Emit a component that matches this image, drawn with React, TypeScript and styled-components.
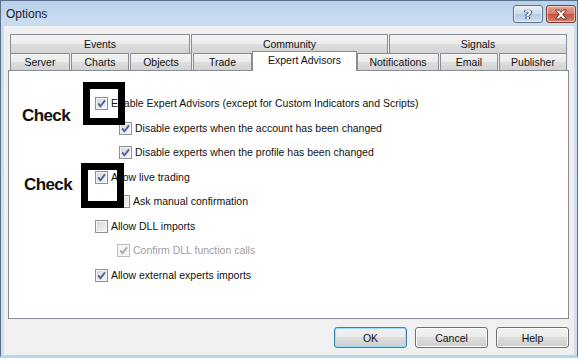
import { FC } from "react";
import styled, { createGlobalStyle } from "styled-components";

const GlobalStyle = createGlobalStyle`
  html, body {
    margin: 0;
    padding: 0;
    background: #fff;
  }
  body {
    font-family: "Liberation Sans", Arial, sans-serif;
    font-size: 10.5px;
    color: #111;
  }
`;

const Window = styled.div`
  position: relative;
  box-sizing: border-box;
  width: 578px;
  height: 358px;
  display: flex;
  flex-direction: column;
  padding: 0 3px;
  border: 1px solid #5b6e8b;
  border-bottom: 3px solid #b3d8ee;
  background: linear-gradient(#b9d0ea 0, #cadcf0 20px, #cfe0f2 100%);
`;

const TitleBar = styled.div`
  height: 25px;
  flex: none;
  display: flex;
  align-items: flex-start;
  justify-content: space-between;
  margin-right: -2px;
`;

const Title = styled.span`
  font-size: 12px;
  line-height: 12px;
  margin: 7px 0 0 2px;
  color: #1b1b2b;
`;

const CaptionButtons = styled.div`
  display: flex;
  gap: 3px;
  margin-top: 4px;
`;

const CaptionButton = styled.div<{ $close?: boolean }>`
  box-sizing: border-box;
  width: 30px;
  height: 18px;
  border-radius: 3px;
  display: flex;
  align-items: center;
  justify-content: center;
  border: 1px solid ${(p) => (p.$close ? "#7b3a30" : "#5a6d8a")};
  box-shadow: inset 0 0 0 1px rgba(255, 255, 255, 0.55);
  background: ${(p) =>
    p.$close
      ? "linear-gradient(#e8a493, #d57a66 48%, #c6523d 52%, #d7826d)"
      : "linear-gradient(#e9f0f8, #cbdbed 48%, #b4c9e2 52%, #cfdff0)"};
`;

const HelpGlyph = styled.span`
  font-family: "DejaVu Sans", sans-serif;
  font-weight: bold;
  font-size: 13px;
  line-height: 13px;
  color: #fff;
  text-shadow: 0 0 1px #2c3d5c, 0 0 1px #2c3d5c, 1px 0 0 #2c3d5c, -1px 0 0 #2c3d5c;
`;

const Client = styled.div`
  flex: 1;
  display: flex;
  flex-direction: column;
  background: #f0f0f0;
  padding: 8px 5px 7px 4px;
`;

const TabRow = styled.div<{ $h: number }>`
  display: flex;
  gap: 1px;
  height: ${(p) => p.$h}px;
  margin: 0 2px;
`;

const Tab = styled.div<{ $w: number; $active?: boolean }>`
  box-sizing: border-box;
  flex: none;
  width: ${(p) => p.$w}px;
  height: 100%;
  display: flex;
  align-items: center;
  justify-content: center;
  border: 1px solid #898c95;
  border-bottom: none;
  white-space: nowrap;
  background: linear-gradient(#f3f3f3, #ebebeb 50%, #dedede 50%, #d3d3d3);

  ${(p) =>
    p.$active &&
    `
    position: relative;
    z-index: 2;
    align-self: flex-start;
    height: 20px;
    margin: -2px -1px -1px;
    padding-bottom: 3px;
    background: #fff;
  `}
`;

const Panel = styled.div`
  box-sizing: border-box;
  height: 249px;
  flex: none;
  background: #fff;
  border: 1px solid #898c95;
  padding: 26px 0 0 86px;
  display: flex;
  flex-direction: column;
  gap: 11.5px;
`;

const OptionRow = styled.div<{ $indent: number; $disabled?: boolean }>`
  display: flex;
  align-items: center;
  height: 13px;
  padding-left: ${(p) => p.$indent}px;
  color: ${(p) => (p.$disabled ? "#a0a0a0" : "#111")};
`;

const Box = styled.span<{ $disabled?: boolean }>`
  box-sizing: border-box;
  flex: none;
  width: 13px;
  height: 13px;
  display: flex;
  align-items: center;
  justify-content: center;
  border: 1px solid ${(p) => (p.$disabled ? "#bdbdbd" : "#8e8f8f")};
  box-shadow: inset 0 0 0 1px #f6f6f6;
  background: ${(p) =>
    p.$disabled ? "#f4f4f4" : "linear-gradient(135deg, #d2d4d8, #f8f8f8)"};
`;

const Label = styled.span`
  margin-left: 3px;
  line-height: 13px;
  white-space: nowrap;
`;

const ButtonRow = styled.div`
  display: flex;
  justify-content: flex-end;
  gap: 8px;
  margin-top: 8px;
`;

const Button = styled.div<{ $default?: boolean }>`
  box-sizing: border-box;
  width: 73px;
  height: 21px;
  display: flex;
  align-items: center;
  justify-content: center;
  border-radius: 3px;
  border: 1px solid ${(p) => (p.$default ? "#3c7fb1" : "#707070")};
  box-shadow: inset 0 0 0 1px ${(p) => (p.$default ? "#9fdcf7" : "#fbfbfb")};
  background: linear-gradient(#f2f2f2, #ebebeb 50%, #dddddd 50%, #cfcfcf);
`;

const Note = styled.span<{ $x: number; $y: number }>`
  position: absolute;
  left: ${(p) => p.$x}px;
  top: ${(p) => p.$y}px;
  font-family: "Liberation Sans", Arial, sans-serif;
  font-weight: bold;
  font-size: 17px;
  line-height: 18px;
  letter-spacing: -0.6px;
  color: #111;
`;

const Marker = styled.div<{ $x: number; $y: number; $w: number; $h: number }>`
  position: absolute;
  box-sizing: border-box;
  left: ${(p) => p.$x}px;
  top: ${(p) => p.$y}px;
  width: ${(p) => p.$w}px;
  height: ${(p) => p.$h}px;
  border: 7px solid #000;
`;

const CheckBox: FC<{ checked?: boolean; disabled?: boolean }> = ({
  checked,
  disabled,
}) => (
  <Box $disabled={disabled}>
    {checked && (
      <svg width="11" height="11" viewBox="0 0 11 11">
        <path
          d="M2.2 5.4 L4.4 8.2 L9 2.4"
          fill="none"
          stroke={disabled ? "#a8a8a8" : "#4a5f99"}
          strokeWidth="1.8"
        />
      </svg>
    )}
  </Box>
);

const topTabs = [
  { name: "Events", w: 180 },
  { name: "Community", w: 197 },
  { name: "Signals", w: 178 },
];

const bottomTabs = [
  { name: "Server", w: 60 },
  { name: "Charts", w: 58 },
  { name: "Objects", w: 62 },
  { name: "Trade", w: 59 },
  { name: "Expert Advisors", w: 105, active: true },
  { name: "Notifications", w: 82 },
  { name: "Email", w: 58 },
  { name: "Publisher", w: 68 },
];

const options = [
  { text: "Enable Expert Advisors (except for Custom Indicators and Scripts)", indent: 0, checked: true },
  { text: "Disable experts when the account has been changed", indent: 24, checked: true },
  { text: "Disable experts when the profile has been changed", indent: 24, checked: true },
  { text: "Allow live trading", indent: 0, checked: true },
  { text: "Ask manual confirmation", indent: 22, checked: false },
  { text: "Allow DLL imports", indent: 0, checked: false },
  { text: "Confirm DLL function calls", indent: 22, checked: true, disabled: true },
  { text: "Allow external experts imports", indent: 0, checked: true },
];

export default function App() {
  return (
    <>
      <GlobalStyle />
      <Window>
        <TitleBar>
          <Title>Options</Title>
          <CaptionButtons>
            <CaptionButton>
              <HelpGlyph>?</HelpGlyph>
            </CaptionButton>
            <CaptionButton $close>
              <svg width="14" height="11" viewBox="0 0 14 11">
                <path
                  d="M1.5 1 H5 L7 3.3 L9 1 H12.5 L8.8 5.5 L12.5 10 H9 L7 7.7 L5 10 H1.5 L5.2 5.5 Z"
                  fill="#fff"
                  stroke="#5b2a22"
                  strokeWidth="0.9"
                />
              </svg>
            </CaptionButton>
          </CaptionButtons>
        </TitleBar>
        <Client>
          <TabRow $h={19}>
            {topTabs.map((t) => (
              <Tab key={t.name} $w={t.w}>
                {t.name}
              </Tab>
            ))}
          </TabRow>
          <TabRow $h={17}>
            {bottomTabs.map((t) => (
              <Tab key={t.name} $w={t.w} $active={t.active}>
                {t.name}
              </Tab>
            ))}
          </TabRow>
          <Panel>
            {options.map((o) => (
              <OptionRow key={o.text} $indent={o.indent} $disabled={o.disabled}>
                <CheckBox checked={o.checked} disabled={o.disabled} />
                <Label>{o.text}</Label>
              </OptionRow>
            ))}
          </Panel>
          <ButtonRow>
            <Button $default>OK</Button>
            <Button>Cancel</Button>
            <Button>Help</Button>
          </ButtonRow>
        </Client>
        <Note $x={21} $y={106}>Check</Note>
        <Note $x={23} $y={175}>Check</Note>
        <Marker $x={82} $y={81} $w={42} $h={43} />
        <Marker $x={80} $y={162} $w={43} $h={45} />
      </Window>
    </>
  );
}
